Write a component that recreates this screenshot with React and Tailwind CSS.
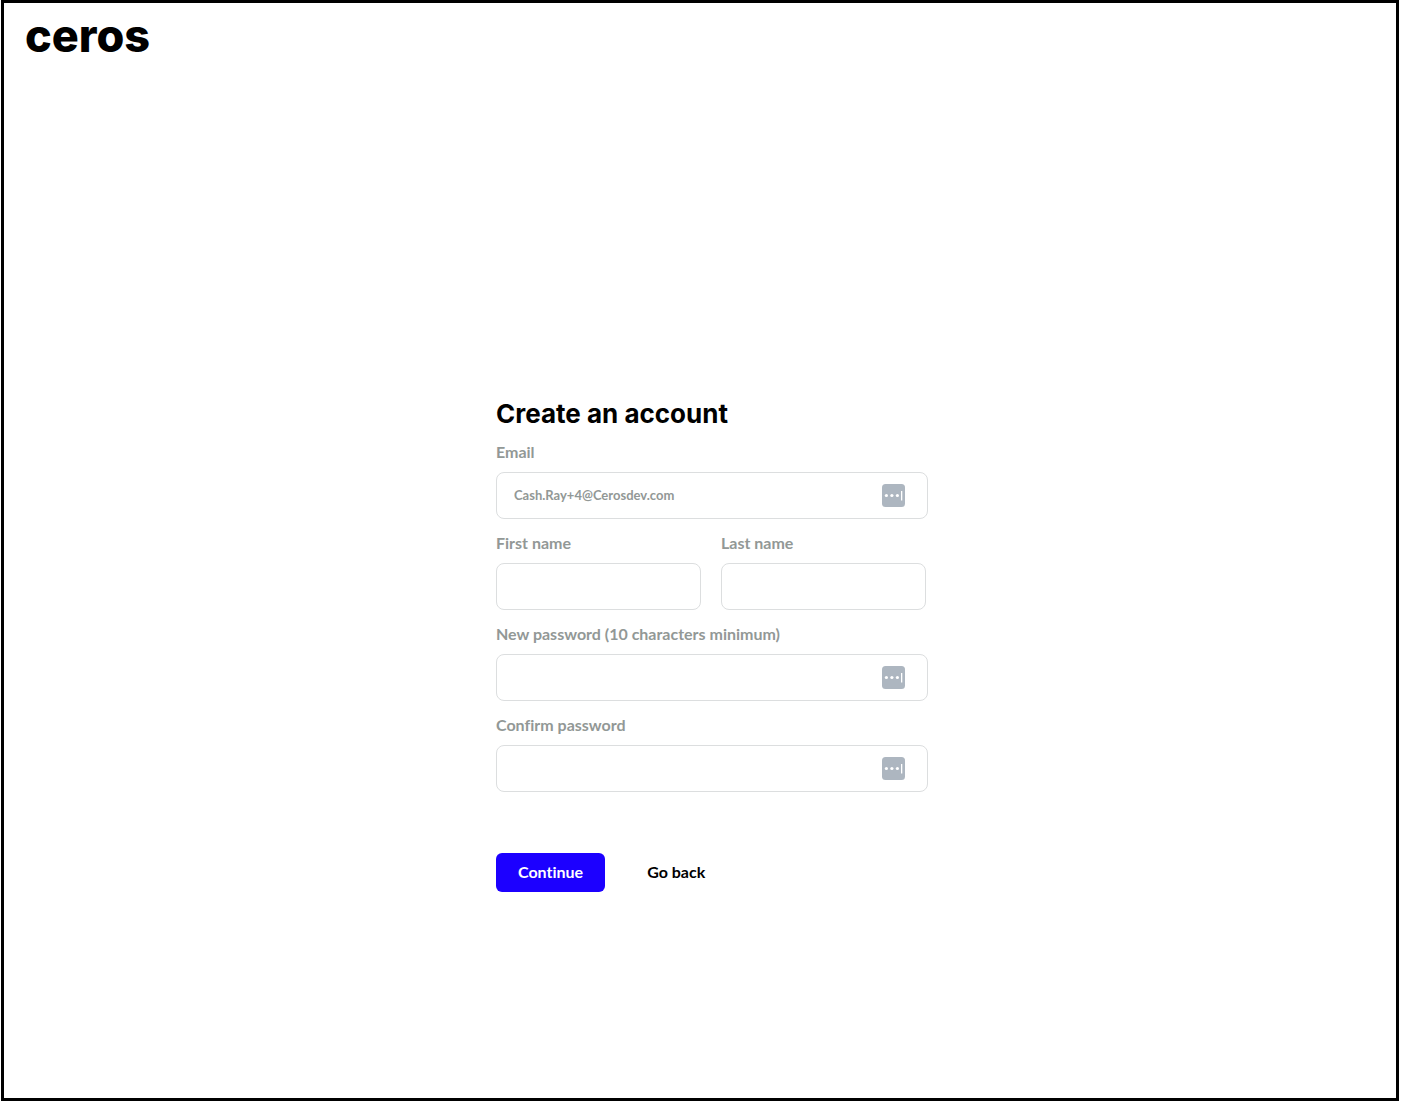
import { useState } from 'react'

// ── Password manager badge shown inside a field ─────────────────────────────
function AutofillIcon() {
  return (
    <svg viewBox="0 0 23 23" aria-hidden="true"
      className="pointer-events-none absolute right-[23px] top-3 size-[23px]">
      <rect width="23" height="23" rx="3.5" fill="#adb6c0" />
      <circle cx="4.4" cy="11.5" r="1.6" fill="#fff" />
      <circle cx="9.9" cy="11.5" r="1.6" fill="#fff" />
      <circle cx="15.4" cy="11.5" r="1.6" fill="#fff" />
      <rect x="19" y="7" width="1.3" height="9.5" fill="#fff" />
    </svg>
  )
}

function Field({ id, label, type = 'text', value, onChange, autofill }) {
  return (
    <div className="min-w-0 flex-1">
      <label htmlFor={id} className="mb-2.5 block text-base leading-5 font-bold text-[#929896]">
        {label}
      </label>
      <div className="relative">
        <input
          id={id} name={id} type={type}
          value={value} onChange={onChange}
          className="block h-[47px] w-full rounded-lg border border-[#dcdedf] bg-white px-[17px]
                     text-[13px] font-bold text-[#929896] focus:border-[#1c00ff] focus:outline-none"
        />
        {autofill && <AutofillIcon />}
      </div>
    </div>
  )
}

// ── Root export ─────────────────────────────────────────────────────────────
export default function App() {
  const [form, setForm] = useState({
    email: 'Cash.Ray+4@Cerosdev.com',
    firstName: '',
    lastName: '',
    password: '',
    confirm: '',
  })

  const set = (key) => (e) => setForm({ ...form, [key]: e.target.value })

  return (
    <div className="flex min-h-screen bg-white pr-0.5 pb-[3px] pl-px font-['Lato',sans-serif] [font-variant-ligatures:none]">
      <div className="flex flex-1 flex-col border-[3px] border-black">
        <header className="px-[21px] pt-2">
          <a href="/" className="inline-block font-['Inter',sans-serif] text-[45px] leading-[50px] font-extrabold text-black">
            ceros
          </a>
        </header>

        <main className="flex flex-1 items-center justify-center pt-[130px] pl-6">
          <form className="w-full max-w-[432px]" onSubmit={e => e.preventDefault()}>
            <h1 className="mb-3 font-['Inter',sans-serif] text-[26px] leading-8 font-bold text-black">
              Create an account
            </h1>

            <div className="flex flex-col gap-3.5">
              <Field id="email" label="Email" type="email" value={form.email} onChange={set('email')} autofill />
              <div className="flex gap-5 pr-0.5">
                <Field id="first-name" label="First name" value={form.firstName} onChange={set('firstName')} />
                <Field id="last-name" label="Last name" value={form.lastName} onChange={set('lastName')} />
              </div>
              <Field id="password" label="New password (10 characters minimum)" type="password"
                value={form.password} onChange={set('password')} autofill />
              <Field id="confirm" label="Confirm password" type="password"
                value={form.confirm} onChange={set('confirm')} autofill />
            </div>

            <div className="mt-[61px] flex gap-5">
              <button type="submit" className="h-[39px] rounded-md bg-[#1c00ff] px-[22px] text-base font-bold text-white">
                Continue
              </button>
              <button type="button" className="h-[39px] px-[22px] text-base font-bold text-black">
                Go back
              </button>
            </div>
          </form>
        </main>
      </div>
    </div>
  )
}
